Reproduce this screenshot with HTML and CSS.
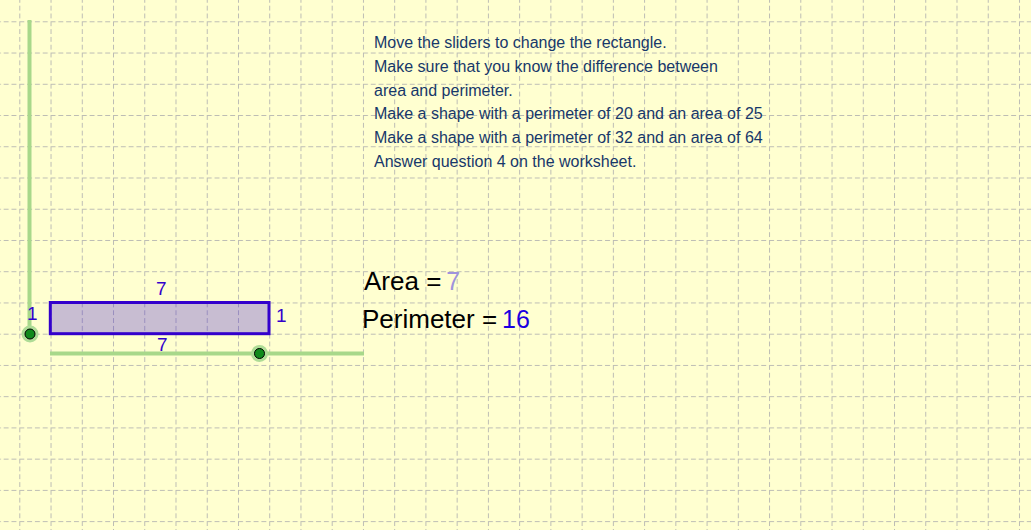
FILE: index.html
```html
<!DOCTYPE html>
<html>
<head>
<meta charset="utf-8">
<link rel="stylesheet" href="styles.css">
</head>
<body>
<div class="canvas">
  <svg class="board" width="1031" height="530" viewBox="0 0 1031 530" xmlns="http://www.w3.org/2000/svg">
    <defs>
      <pattern id="grid" x="19.3" y="21.3" width="31.24" height="31.24" patternUnits="userSpaceOnUse">
        <line x1="0.5" y1="0" x2="0.5" y2="31.24" class="gl"/>
        <line x1="0" y1="0.5" x2="31.24" y2="0.5" class="gl"/>
      </pattern>
    </defs>
    <rect x="0" y="0" width="1031" height="530" fill="url(#grid)"/>
    <line x1="29.5" y1="20" x2="29.5" y2="334" class="slider"/>
    <line x1="50" y1="353.5" x2="364" y2="353.5" class="slider"/>
    <rect x="50.3" y="302.5" width="218.7" height="31.2" class="poly"/>
    <circle cx="30" cy="334" r="8.5" class="halo"/>
    <circle cx="30" cy="334" r="5" class="pt"/>
    <circle cx="259.5" cy="353.5" r="8.5" class="halo"/>
    <circle cx="259.5" cy="353.5" r="5" class="pt"/>
  </svg>

  <span class="lbl top">7</span>
  <span class="lbl bottom">7</span>
  <span class="lbl left">1</span>
  <span class="lbl right">1</span>

  <div class="instructions">
    <p>Move the sliders to change the rectangle.</p>
    <p>Make sure that you know the difference between</p>
    <p>area and perimeter.</p>
    <p>Make a shape with a perimeter of 20 and an area of 25</p>
    <p>Make a shape with a perimeter of 32 and an area of 64</p>
    <p>Answer question 4 on the worksheet.</p>
  </div>

  <div class="formula area">Area =<span class="val val-area">7</span></div>
  <div class="formula perim">Perimeter =<span class="val val-perim">16</span></div>
</div>
</body>
</html>
```

FILE: styles.css
```css
html, body {
  margin: 0;
  padding: 0;
  background: #ffffd0;
}
.canvas {
  position: relative;
  width: 1031px;
  height: 530px;
  overflow: hidden;
  background: #ffffd0;
  font-family: "Liberation Sans", Arial, sans-serif;
}
.board {
  position: absolute;
  left: 0;
  top: 0;
  display: block;
}
.gl {
  stroke: #bcbcb4;
  stroke-width: 1;
  stroke-dasharray: 5 2.8;
}
.slider {
  stroke: #a8d88a;
  stroke-width: 4;
}
.poly {
  fill: rgba(72, 38, 214, 0.3);
  stroke: #3300cc;
  stroke-width: 3;
}
.halo {
  fill: #aedc96;
}
.pt {
  fill: #108a1c;
  stroke: #000;
  stroke-width: 1;
}
.lbl {
  position: absolute;
  color: #3300cc;
  font-size: 19px;
  line-height: 20px;
}
.lbl.top { left: 156px; top: 279px; }
.lbl.bottom { left: 157px; top: 335px; }
.lbl.left { left: 27px; top: 304px; }
.lbl.right { left: 276px; top: 306px; }

.instructions {
  position: absolute;
  left: 374px;
  top: 31px;
  color: #17386a;
  font-size: 16px;
}
.instructions p {
  margin: 0;
  line-height: 23.8px;
}
.formula {
  position: absolute;
  color: #000;
  font-size: 26px;
  line-height: 30px;
  white-space: nowrap;
}
.formula .val {
  margin-left: 5px;
  font-size: 25px;
}
.formula.area { left: 364px; top: 266px; }
.formula.perim { left: 362px; top: 304px; }
.val-area { color: #9f93dc; }
.val-perim { color: #1a00e0; }
```
